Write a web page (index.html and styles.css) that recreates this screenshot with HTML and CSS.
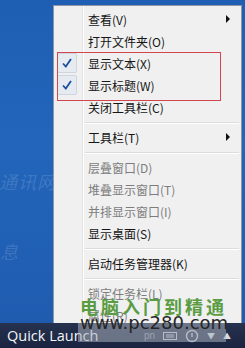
FILE: index.html
```html
<!DOCTYPE html>
<html lang="zh-CN">
<head>
<meta charset="UTF-8" />
<title>任务栏右键菜单</title>
<link rel="stylesheet" href="styles.css">
</head>
<body>

<div class="desktop">
  <div class="bg-mark mark-a">通讯网</div>
  <div class="bg-mark mark-b">息</div>

  <div class="menu">
    <div class="item"><span class="gut"></span><span class="label">查看(V)</span><span class="arrow"></span></div>
    <div class="item"><span class="gut"></span><span class="label">打开文件夹(O)</span></div>
    <div class="item"><span class="gut"><span class="check"><svg width="12" height="12" viewBox="0 0 12 12"><path d="M2 6.5 L4.8 9.5 L10 2" fill="none" stroke="#1b4f9c" stroke-width="1.8"/></svg></span></span><span class="label">显示文本(X)</span></div>
    <div class="item"><span class="gut"><span class="check"><svg width="12" height="12" viewBox="0 0 12 12"><path d="M2 6.5 L4.8 9.5 L10 2" fill="none" stroke="#1b4f9c" stroke-width="1.8"/></svg></span></span><span class="label">显示标题(W)</span></div>
    <div class="item"><span class="gut"></span><span class="label">关闭工具栏(C)</span></div>
    <div class="sep"></div>
    <div class="item"><span class="gut"></span><span class="label">工具栏(T)</span><span class="arrow"></span></div>
    <div class="sep"></div>
    <div class="item off"><span class="gut"></span><span class="label">层叠窗口(D)</span></div>
    <div class="item off"><span class="gut"></span><span class="label">堆叠显示窗口(T)</span></div>
    <div class="item off"><span class="gut"></span><span class="label">并排显示窗口(I)</span></div>
    <div class="item"><span class="gut"></span><span class="label">显示桌面(S)</span></div>
    <div class="sep"></div>
    <div class="item"><span class="gut"></span><span class="label">启动任务管理器(K)</span></div>
    <div class="sep"></div>
    <div class="item off"><span class="gut"></span><span class="label">锁定任务栏(L)</span></div>
    <div class="item off"><span class="gut"></span><span class="label">属性(R)</span></div>

    <div class="redbox"></div>
  </div>
</div>

<div class="taskbar">
  <span class="ql">Quick Launch</span>
  <div class="tray">
    <span class="tray-txt">pn</span>
    <svg width="14" height="10" viewBox="0 0 14 10"><rect x="0.5" y="1.5" width="13" height="7" fill="none" stroke="#c8ccd6"/><path d="M3 4h8M3 6h8" stroke="#c8ccd6"/></svg>
    <svg width="14" height="14" viewBox="0 0 14 14"><circle cx="7" cy="7" r="5.5" fill="none" stroke="#c8ccd6" stroke-width="1.4"/><path d="M7 4v4" stroke="#c8ccd6" stroke-width="1.4"/></svg>
    <span class="tri">▼</span>
    <span class="tri">▲</span>
  </div>
</div>

<div class="wm-green">电脑入门到精通</div>
<div class="wm-band"></div>
<div class="wm-url">www.pc280.com</div>

</body>
</html>
```

FILE: styles.css
```css
body { margin: 0; width: 245px; height: 348px; overflow: hidden; position: relative; font-family: "Noto Sans CJK SC", sans-serif; background: #1b2640; }

.desktop { height: 323px; box-sizing: border-box; padding: 5px 0 0 53px; overflow: hidden; position: relative;
  background: linear-gradient(180deg, #1f5fb3 0%, #2265ba 45%, #1f5cb0 100%); }

.bg-mark { position: absolute; color: rgba(190, 210, 240, 0.2); font-size: 18px; font-style: italic; }
.mark-a { left: -1px; top: 168px; letter-spacing: 1px; }
.mark-b { left: 0; top: 238px; }

.menu { width: 189px; box-sizing: border-box; border: 1px solid #8e96a3; padding-top: 2px; position: relative;
  background: linear-gradient(to right, #f0f0f0 0 28px, #e2e3e3 28px 29px, #ffffff 29px 30px, #f0f0f0 30px); }

.item { display: flex; align-items: center; height: 22px; font-size: 12px; color: #161616; }
.item.off { color: #7d7d7d; }
.gut { width: 34px; height: 22px; flex: none; position: relative; }
.label { white-space: nowrap; }
.arrow { margin-left: auto; margin-right: 11px; border-left: 4px solid #111; border-top: 4px solid transparent; border-bottom: 4px solid transparent; }

.check { position: absolute; left: 3px; top: 1px; width: 18px; height: 18px; border: 1px solid #cfd5de; border-radius: 2px; background: #e6ebf1;
  display: flex; align-items: center; justify-content: center; }

.sep { height: 8px; display: flex; align-items: center; padding: 0 2px 0 31px; }
.sep::before { content: ""; flex: 1; height: 1px; background: #dcdcdc; box-shadow: 0 1px #ffffff; }

.redbox { position: absolute; left: 3px; top: 46px; width: 162px; height: 47px; border: 1px solid #d4464f; }

.taskbar { height: 25px; display: flex; align-items: center; background: linear-gradient(180deg, #26324f, #1a2440); }
.ql { color: #f4f6fa; font-family: "Open Sans", sans-serif; font-size: 14.5px; padding-left: 7px; }
.tray { margin-left: auto; display: flex; align-items: center; gap: 8px; padding-right: 14px; }
.tray-txt { color: #8d95a8; font-family: "Liberation Sans", sans-serif; font-size: 10px; }
.tri { color: #d8dbe3; font-size: 8px; }

.wm-green { position: absolute; left: 80px; top: 293px; font-size: 18px; font-weight: 700; letter-spacing: 3px; color: #5a9c42; }
.wm-band { position: absolute; left: 78px; top: 323px; width: 148px; height: 19px; background: rgba(170, 175, 188, 0.55); }
.wm-url { position: absolute; left: 80px; top: 312px; font-family: "DejaVu Sans", sans-serif; font-size: 18px; color: #262626; }
```
